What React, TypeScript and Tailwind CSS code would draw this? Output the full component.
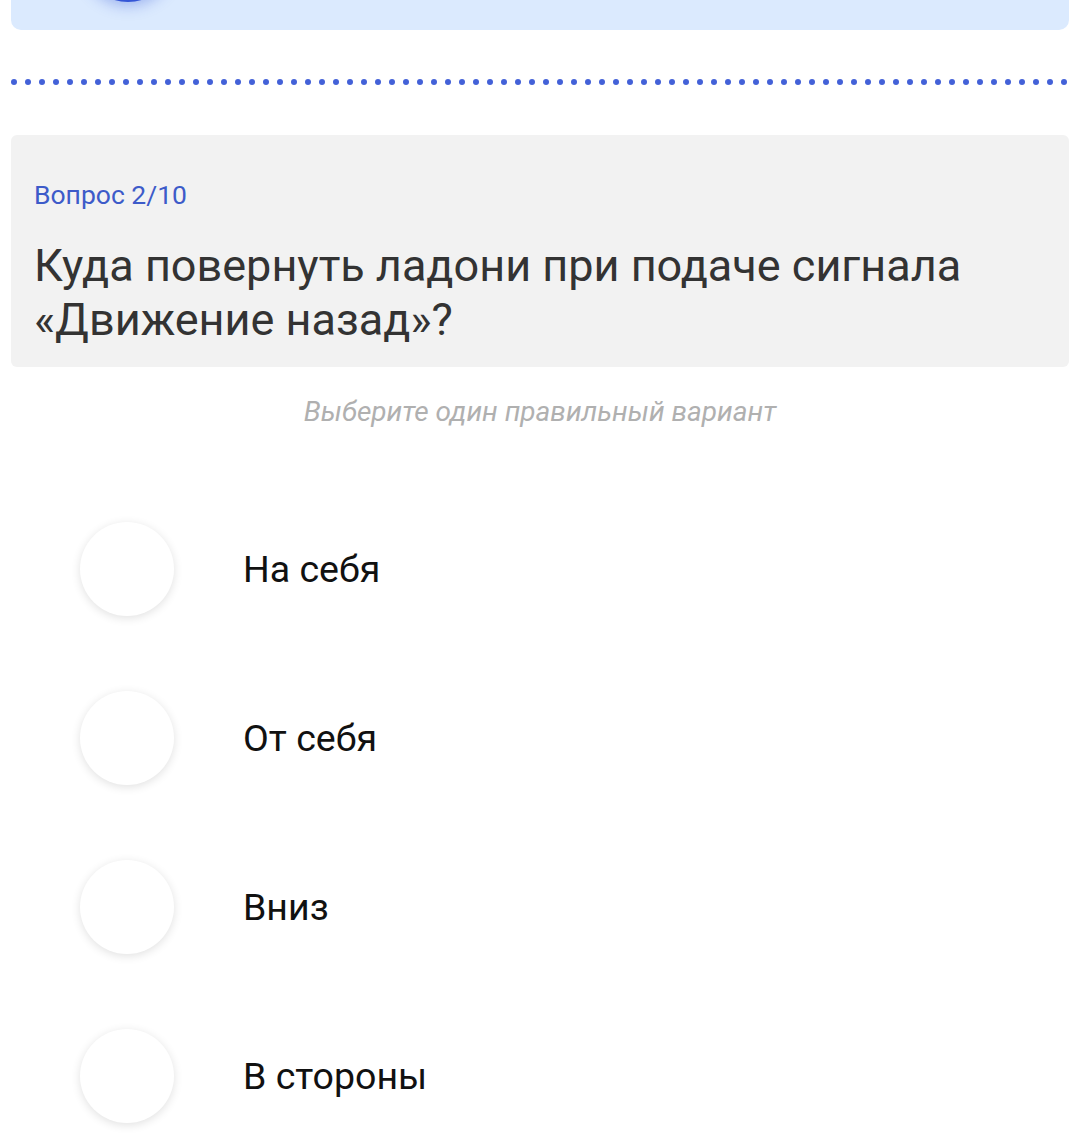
const OPTIONS = ["На себя", "От себя", "Вниз", "В стороны"]

const DOTS = Array.from({ length: 76 }, (_, i) => i)

export default function App() {
  return (
    <div className="min-h-[1145px] bg-white px-[11px] font-['Roboto','Noto_Sans',sans-serif]">
      {/* верх предыдущей карточки */}
      <div className="relative h-[30px] overflow-hidden rounded-b-[10px] bg-[#dbeafe]">
        <div className="absolute left-[70px] top-[-92px] h-[94px] w-[94px] rounded-full bg-[#3556d6] shadow-[0_4px_14px_rgba(53,86,214,0.35)]" />
      </div>

      {/* разделитель из точек */}
      <div className="mt-[49px] flex h-[6px] items-center justify-between pr-[1px]">
        {DOTS.map((d) => (
          <span key={d} className="h-[6px] w-[6px] shrink-0 rounded-full bg-[#4361d8]" />
        ))}
      </div>

      {/* вопрос */}
      <div className="mt-[50px] rounded-[6px] bg-[#f2f2f2] px-[23px] pb-[20px] pt-[44px]">
        <p className="text-[26.5px] leading-[32px] text-[#3d5bc9]">Вопрос 2/10</p>
        <p className="mt-[28px] text-[45px] leading-[54px] text-[#333333]">
          Куда повернуть ладони при подаче сигнала «Движение назад»?
        </p>
      </div>

      <p className="mt-[30px] text-center text-[28px] italic leading-[30px] text-[#b0b0b0]">
        Выберите один правильный вариант
      </p>

      {/* варианты ответа */}
      <div className="mt-[95px] flex flex-col gap-[75px] pl-[69px]">
        {OPTIONS.map((o) => (
          <div key={o} className="flex items-center gap-[69px]">
            <span className="h-[94px] w-[94px] shrink-0 rounded-full bg-white shadow-[0_2px_10px_rgba(0,0,0,0.12)]" />
            <span className="text-[37.5px] leading-[40px] text-[#111111]">{o}</span>
          </div>
        ))}
      </div>
    </div>
  )
}
